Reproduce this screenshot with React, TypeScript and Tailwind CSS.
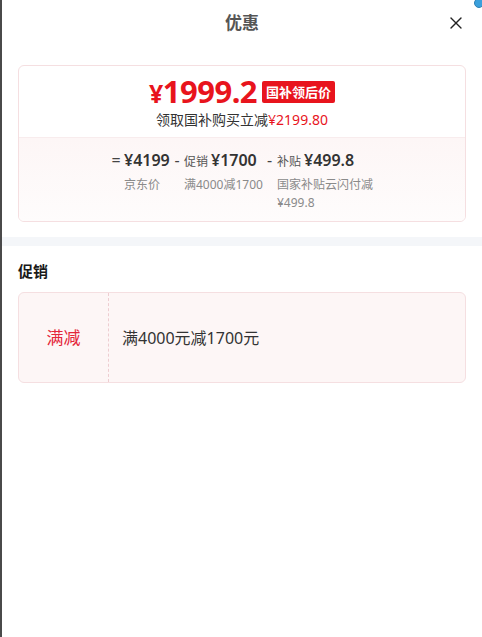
import { X } from "lucide-react";

const font = { fontFamily: '"Noto Sans", "Noto Sans CJK SC", sans-serif' };

function PriceCol({
  prefix,
  value,
  label,
  width,
  wrap,
}: {
  prefix?: string;
  value: string;
  label: string;
  width: string;
  wrap?: boolean;
}) {
  return (
    <div className={"flex shrink-0 flex-col " + width}>
      <div className="flex items-baseline gap-[3px] whitespace-nowrap">
        {prefix && <span className="text-[12px] text-[#555]">{prefix}</span>}
        <span className="text-[16px] font-semibold leading-[24px] text-[#333]">{value}</span>
      </div>
      <div
        className={
          wrap
            ? "mt-[4px] text-[12px] leading-[18px] text-[#8a8a8a]"
            : "mt-[4px] whitespace-nowrap text-[12px] leading-[18px] text-[#8a8a8a]"
        }
      >
        {label}
      </div>
    </div>
  );
}

export default function App() {
  return (
    <div className="relative flex min-h-[637px] w-[482px] overflow-hidden bg-white" style={font}>
      {/* page behind the sheet */}
      <div className="w-[2px] shrink-0 bg-[#4a4a4a]" />

      <div className="flex flex-1 flex-col">
        {/* header */}
        <div className="grid h-[46px] grid-cols-[1fr_auto_1fr] items-center">
          <div />
          <h1 className="text-[17px] font-bold text-[#555]">优惠</h1>
          <X className="mr-[16px] h-[20px] w-[20px] justify-self-end text-[#222]" strokeWidth={1.6} />
        </div>

        {/* price summary card */}
        <div className="mx-[16px] mt-[19px] overflow-hidden rounded-[6px] border border-[#f5dfe1]">
          <div className="flex flex-col items-center pt-[8px] pb-[7px]">
            <div className="flex items-center gap-[5px]">
              <span className="text-[31px] font-bold leading-[34px] tracking-[-0.5px] text-[#e8141d]">
                <span className="text-[25px]">¥</span>1999.2
              </span>
              <span className="rounded-[2px] bg-[#e8141d] px-[4px] text-[13px] font-bold leading-[22px] text-white">
                国补领后价
              </span>
            </div>
            <div className="text-[14px] leading-[20px] text-[#333]">
              领取国补购买立减<span className="text-[#e8141d]">¥2199.80</span>
            </div>
          </div>
          <div className="flex border-t border-[#f8eced] bg-gradient-to-b from-[#fdf6f6] to-[#fefcfc] pt-[10px] pb-[9px] pl-[89px]">
            <span className="w-[16px] shrink-0 text-center text-[16px] leading-[24px] text-[#444]">=</span>
            <PriceCol value="¥4199" label="京东价" width="w-[46px]" />
            <span className="w-[14px] shrink-0 text-center text-[16px] leading-[24px] text-[#444]">-</span>
            <PriceCol prefix="促销" value="¥1700" label="满4000减1700" width="w-[78px]" />
            <span className="w-[15px] shrink-0 text-center text-[16px] leading-[24px] text-[#444]">-</span>
            <PriceCol prefix="补贴" value="¥499.8" label="国家补贴云闪付减¥499.8" width="w-[100px]" wrap />
          </div>
        </div>

        <div className="mt-[15px] h-[9px] bg-[#f4f6f9]" />

        {/* promotions */}
        <h2 className="mt-[15px] px-[16px] text-[15px] font-bold leading-[20px] text-[#1a1a1a]">促销</h2>
        <div className="mx-[16px] mt-[11px] flex h-[91px] rounded-[6px] border border-[#f5dfe1] bg-[#fdf6f6]">
          <div className="flex w-[90px] items-center justify-center border-r border-dashed border-[#eecdd1] text-[17px] text-[#e4263a]">
            满减
          </div>
          <div className="flex items-center pl-[13px] text-[16px] text-[#333]">满4000元减1700元</div>
        </div>
      </div>

      <div className="absolute -top-[2px] -right-[2px] h-[10px] w-[10px] rounded-full border border-[#2d7fb3] bg-[#3aa0dc]" />
    </div>
  );
}
